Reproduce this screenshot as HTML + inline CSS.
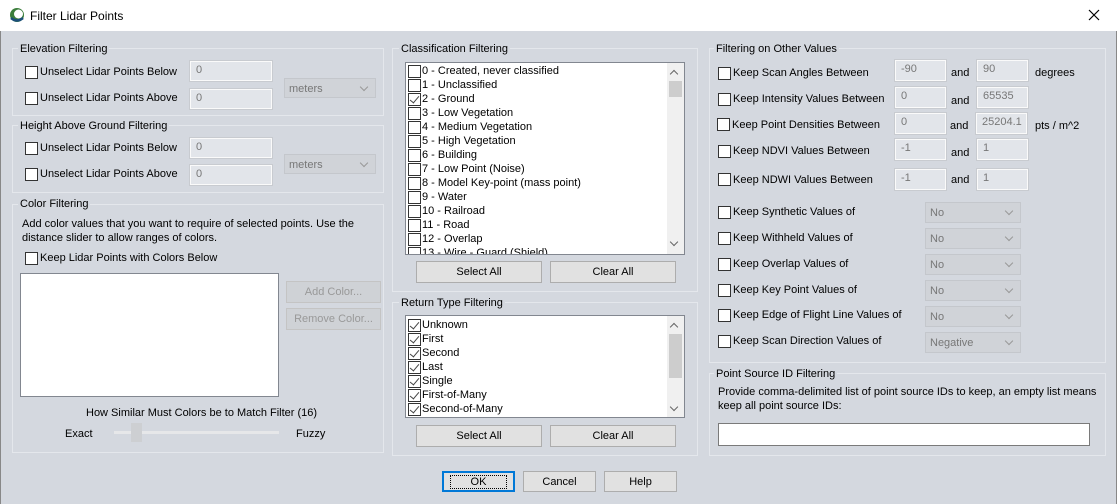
<!DOCTYPE html>
<html><head><style>
*{box-sizing:border-box;margin:0;padding:0}
body{width:1117px;height:504px;background:#d4d8df;font-family:"Liberation Sans",sans-serif;font-size:11px;color:#000;position:relative;overflow:hidden}
.a{position:absolute;white-space:nowrap;line-height:16px}
.title{left:0;top:0;width:1117px;height:31px;background:#fff}
.grp{position:absolute;border:1px solid #e4e7ec;}
.gl{position:absolute;background:#d4d8df;padding:0 2px;white-space:nowrap;font-size:11px;line-height:15px}
.cb{position:absolute;width:13px;height:13px;border:1px solid #333;background:#fff;margin-top:1px}
.in{position:absolute;background:#e2e5ea;border:1px solid #fafafa;color:#777;padding:2px 5px;font-size:11px;outline:1px solid #c8cbd0}
.dd{position:absolute;background:#d0d3d8;border:1px solid #c4c7cc;color:#777;padding:4px 4px;font-size:11px}
.dd:after{content:"";position:absolute;right:8px;top:5px;width:5px;height:5px;border-right:1px solid #999;border-bottom:1px solid #999;transform:rotate(45deg)}
.btn{position:absolute;background:#e1e1e1;border:1px solid #adadad;text-align:center;font-size:11px;line-height:21px}
.list{position:absolute;background:#fff;border:1px solid #828790;overflow:hidden}
.li{position:absolute;left:1px;height:14px;line-height:15px;padding-left:15px;white-space:nowrap}
.li i{position:absolute;left:1px;top:1px;width:13px;height:13px;border:1px solid #333;background:#fff;font-style:normal}
.li i.k:after{content:"";position:absolute;left:3px;top:0px;width:4px;height:8px;border-right:1px solid #444;border-bottom:1px solid #444;transform:rotate(40deg)}
.sb{position:absolute;top:0;right:0;width:17px;bottom:0;background:#f0f0f0}
.sb b{position:absolute;left:2px;width:13px;background:#cdcdcd}
.sb s{position:absolute;left:4px;width:6px;height:6px;border-left:1px solid #666;border-top:1px solid #666;transform:rotate(45deg);text-decoration:none}
</style></head><body>
<div class="a title"></div>
<div class="a" style="left:0;top:31px;width:1px;height:473px;background:#888"></div>
<div class="a" style="left:1116px;top:31px;width:1px;height:473px;background:#888"></div>
<svg class="a" style="left:9px;top:7px" width="16" height="16" viewBox="0 0 16 16"><circle cx="8" cy="8" r="7" fill="#3a7d3a"/><circle cx="9.5" cy="7" r="4.5" fill="#fff"/><path d="M2 11 Q8 16 14 11" stroke="#1b4f7a" stroke-width="2.5" fill="none"/></svg>
<div class="a" style="left:30px;top:8px;font-size:12px">Filter Lidar Points</div>
<svg class="a" style="left:1088px;top:9px" width="12" height="12" viewBox="0 0 12 12"><path d="M1 1L11 11M11 1L1 11" stroke="#000" stroke-width="1.2"/></svg>

<!-- Elevation -->
<div class="grp" style="left:12px;top:48px;width:372px;height:68px"></div>
<div class="gl" style="left:18px;top:42px">Elevation Filtering</div>
<div class="cb" style="left:25px;top:65px"></div><div class="a" style="left:40px;top:64px">Unselect Lidar Points Below</div>
<div class="cb" style="left:25px;top:91px"></div><div class="a" style="left:40px;top:90px">Unselect Lidar Points Above</div>
<div class="in" style="left:190px;top:61px;width:82px;height:20px">0</div>
<div class="in" style="left:190px;top:89px;width:82px;height:20px">0</div>
<div class="dd" style="left:284px;top:78px;width:92px;height:20px">meters</div>

<div class="grp" style="left:12px;top:125px;width:372px;height:68px"></div>
<div class="gl" style="left:18px;top:119px">Height Above Ground Filtering</div>
<div class="cb" style="left:25px;top:141px"></div><div class="a" style="left:40px;top:140px">Unselect Lidar Points Below</div>
<div class="cb" style="left:25px;top:167px"></div><div class="a" style="left:40px;top:166px">Unselect Lidar Points Above</div>
<div class="in" style="left:190px;top:138px;width:82px;height:20px">0</div>
<div class="in" style="left:190px;top:165px;width:82px;height:20px">0</div>
<div class="dd" style="left:284px;top:154px;width:92px;height:20px">meters</div>

<div class="grp" style="left:12px;top:204px;width:372px;height:249px"></div>
<div class="gl" style="left:18px;top:197px">Color Filtering</div>
<div class="a" style="left:22px;top:217px;line-height:14px">Add color values that you want to require of selected points. Use the<br>distance slider to allow ranges of colors.</div>
<div class="cb" style="left:25px;top:251px"></div><div class="a" style="left:40px;top:250px">Keep Lidar Points with Colors Below</div>
<div class="a" style="left:20px;top:273px;width:259px;height:124px;background:#fff;border:1px solid #828790"></div>
<div class="btn" style="left:286px;top:281px;width:95px;height:22px;color:#999;border-color:#c4c4c4;background:#cfd2d6">Add Color...</div>
<div class="btn" style="left:286px;top:308px;width:95px;height:22px;color:#999;border-color:#c4c4c4;background:#cfd2d6">Remove Color...</div>
<div class="a" style="left:86px;top:405px">How Similar Must Colors be to Match Filter (16)</div>
<div class="a" style="left:65px;top:426px">Exact</div>
<div class="a" style="left:114px;top:431px;width:165px;height:3px;background:#e6e7e9"></div>
<div class="a" style="left:131px;top:423px;width:11px;height:19px;background:#cdcfd2"></div>
<div class="a" style="left:296px;top:426px">Fuzzy</div>

<!-- Classification -->
<div class="grp" style="left:392px;top:48px;width:306px;height:244px"></div>
<div class="gl" style="left:399px;top:42px">Classification Filtering</div>
<div class="list" style="left:405px;top:62px;width:280px;height:193px">
<div class="li" style="top:1px"><i></i>0 - Created, never classified</div>
<div class="li" style="top:15px"><i></i>1 - Unclassified</div>
<div class="li" style="top:29px"><i class="k"></i>2 - Ground</div>
<div class="li" style="top:43px"><i></i>3 - Low Vegetation</div>
<div class="li" style="top:57px"><i></i>4 - Medium Vegetation</div>
<div class="li" style="top:71px"><i></i>5 - High Vegetation</div>
<div class="li" style="top:85px"><i></i>6 - Building</div>
<div class="li" style="top:99px"><i></i>7 - Low Point (Noise)</div>
<div class="li" style="top:113px"><i></i>8 - Model Key-point (mass point)</div>
<div class="li" style="top:127px"><i></i>9 - Water</div>
<div class="li" style="top:141px"><i></i>10 - Railroad</div>
<div class="li" style="top:155px"><i></i>11 - Road</div>
<div class="li" style="top:169px"><i></i>12 - Overlap</div>
<div class="li" style="top:183px"><i></i>13 - Wire - Guard (Shield)</div>
<div class="sb"><s style="top:8px"></s><b style="top:18px;height:16px"></b><s style="top:176px;transform:rotate(225deg)"></s></div>
</div>
<div class="btn" style="left:416px;top:261px;width:126px;height:22px">Select All</div>
<div class="btn" style="left:550px;top:261px;width:126px;height:22px">Clear All</div>

<div class="grp" style="left:392px;top:302px;width:306px;height:154px"></div>
<div class="gl" style="left:399px;top:296px">Return Type Filtering</div>
<div class="list" style="left:405px;top:315px;width:280px;height:103px">
<div class="li" style="top:2px"><i class="k"></i>Unknown</div>
<div class="li" style="top:16px"><i class="k"></i>First</div>
<div class="li" style="top:30px"><i class="k"></i>Second</div>
<div class="li" style="top:44px"><i class="k"></i>Last</div>
<div class="li" style="top:58px"><i class="k"></i>Single</div>
<div class="li" style="top:72px"><i class="k"></i>First-of-Many</div>
<div class="li" style="top:86px"><i class="k"></i>Second-of-Many</div>
<div class="sb"><s style="top:8px"></s><b style="top:18px;height:44px"></b><s style="top:88px;transform:rotate(225deg)"></s></div>
</div>
<div class="btn" style="left:416px;top:425px;width:126px;height:22px">Select All</div>
<div class="btn" style="left:550px;top:425px;width:126px;height:22px">Clear All</div>

<!-- Other values -->
<div class="grp" style="left:709px;top:48px;width:397px;height:315px"></div>
<div class="gl" style="left:714px;top:42px">Filtering on Other Values</div>
<div class="cb" style="left:718px;top:66px"></div><div class="a" style="left:733px;top:65px">Keep Scan Angles Between</div>
<div class="in" style="left:895px;top:60px;width:51px;height:21px">-90</div><div class="a" style="left:951px;top:65px">and</div>
<div class="in" style="left:977px;top:60px;width:51px;height:21px">90</div><div class="a" style="left:1035px;top:65px">degrees</div>
<div class="cb" style="left:718px;top:92px"></div><div class="a" style="left:733px;top:91px">Keep Intensity Values Between</div>
<div class="in" style="left:895px;top:87px;width:51px;height:21px">0</div><div class="a" style="left:951px;top:93px">and</div>
<div class="in" style="left:977px;top:87px;width:51px;height:21px">65535</div>
<div class="cb" style="left:717px;top:117px"></div><div class="a" style="left:732px;top:117px">Keep Point Densities Between</div>
<div class="in" style="left:895px;top:113px;width:51px;height:21px">0</div><div class="a" style="left:950px;top:118px">and</div>
<div class="in" style="left:976px;top:113px;width:51px;height:21px">25204.1</div><div class="a" style="left:1035px;top:118px">pts / m^2</div>
<div class="cb" style="left:718px;top:144px"></div><div class="a" style="left:733px;top:143px">Keep NDVI Values Between</div>
<div class="in" style="left:895px;top:139px;width:51px;height:21px">-1</div><div class="a" style="left:951px;top:145px">and</div>
<div class="in" style="left:977px;top:139px;width:51px;height:21px">1</div>
<div class="cb" style="left:718px;top:172px"></div><div class="a" style="left:733px;top:172px">Keep NDWI Values Between</div>
<div class="in" style="left:895px;top:169px;width:51px;height:21px">-1</div><div class="a" style="left:951px;top:172px">and</div>
<div class="in" style="left:977px;top:169px;width:51px;height:21px">1</div>

<div class="cb" style="left:718px;top:205px"></div><div class="a" style="left:733px;top:204px">Keep Synthetic Values of</div><div class="dd" style="left:925px;top:202px;width:96px;height:21px">No</div>
<div class="cb" style="left:718px;top:231px"></div><div class="a" style="left:733px;top:230px">Keep Withheld Values of</div><div class="dd" style="left:925px;top:228px;width:96px;height:21px">No</div>
<div class="cb" style="left:718px;top:257px"></div><div class="a" style="left:733px;top:256px">Keep Overlap Values of</div><div class="dd" style="left:925px;top:254px;width:96px;height:21px">No</div>
<div class="cb" style="left:718px;top:283px"></div><div class="a" style="left:733px;top:282px">Keep Key Point Values of</div><div class="dd" style="left:925px;top:280px;width:96px;height:21px">No</div>
<div class="cb" style="left:718px;top:308px"></div><div class="a" style="left:733px;top:307px">Keep Edge of Flight Line Values of</div><div class="dd" style="left:925px;top:306px;width:96px;height:21px">No</div>
<div class="cb" style="left:718px;top:334px"></div><div class="a" style="left:733px;top:333px">Keep Scan Direction Values of</div><div class="dd" style="left:925px;top:332px;width:96px;height:21px">Negative</div>

<div class="grp" style="left:709px;top:373px;width:397px;height:83px"></div>
<div class="gl" style="left:714px;top:367px">Point Source ID Filtering</div>
<div class="a" style="left:718px;top:385px;line-height:14px">Provide comma-delimited list of point source IDs to keep, an empty list means<br>keep all point source IDs:</div>
<div class="a" style="left:718px;top:423px;width:372px;height:23px;background:#fff;border:1px solid #7a7a7a"></div>

<div class="btn" style="left:442px;top:471px;width:73px;height:21px;border:2px solid #0078d7;line-height:18px"><span style="outline:1px dotted #000;padding:0 20px">OK</span></div>
<div class="btn" style="left:523px;top:471px;width:73px;height:21px;line-height:20px">Cancel</div>
<div class="btn" style="left:604px;top:471px;width:73px;height:21px;line-height:20px">Help</div>
</body></html>
